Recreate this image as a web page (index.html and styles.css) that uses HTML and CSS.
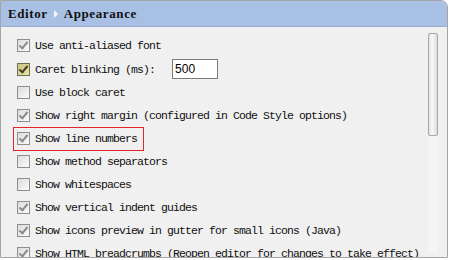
FILE: index.html
```html
<!DOCTYPE html>
<html lang="en">

<head>
    <meta charset="UTF-8">
    <title>Editor - Appearance</title>
    <link rel="stylesheet" href="styles.css">
</head>

<body>
    <div class="panel">
        <div class="header">
            <span>Editor</span>
            <span class="arrow"></span>
            <span>Appearance</span>
        </div>

        <div class="content">
            <ul class="options">
                <li class="option"><span class="box checked"></span>Use anti-aliased font</li>
                <li class="option caret-row">
                    <span class="box checked hover"></span>Caret blinking (ms):
                    <input class="num" type="text" value="500">
                </li>
                <li class="option"><span class="box"></span>Use block caret</li>
                <li class="option"><span class="box checked"></span>Show right margin (configured in Code Style options)</li>
                <li class="option">
                    <span class="marked"><span class="box checked"></span>Show line numbers</span>
                </li>
                <li class="option"><span class="box"></span>Show method separators</li>
                <li class="option"><span class="box"></span>Show whitespaces</li>
                <li class="option"><span class="box checked"></span>Show vertical indent guides</li>
                <li class="option"><span class="box checked"></span>Show icons preview in gutter for small icons (Java)</li>
                <li class="option"><span class="box checked"></span>Show HTML breadcrumbs (Reopen editor for changes to take effect)</li>
            </ul>

            <div class="scrollbar">
                <div class="thumb"></div>
            </div>
        </div>
    </div>
</body>

</html>
```

FILE: styles.css
```css
body {
    margin: 0;
    background-color: #fff;
    font-family: "Liberation Mono", "DejaVu Sans Mono", monospace;
}

.panel {
    width: 446px;
    height: 256px;
    border: 1px solid #a5a5a5;
    border-radius: 0 7px 0 0;
    background-color: #f0f0f0;
    overflow: hidden;
}

.header {
    height: 25px;
    display: flex;
    align-items: center;
    gap: 6px;
    padding-left: 7px;
    background-color: #a8c0e4;
    border-bottom: 1px solid #97aed2;
    font-family: "Liberation Serif", serif;
    font-size: 13px;
    font-weight: bold;
    letter-spacing: 0.6px;
    color: #111;
}

.arrow {
    width: 0;
    height: 0;
    border-top: 4px solid transparent;
    border-bottom: 4px solid transparent;
    border-left: 4px solid #f4f6fa;
}

.content {
    display: flex;
    height: 230px;
}

.options {
    flex: 1;
    list-style: none;
    margin: 0;
    padding: 7px 0 0 12px;
    white-space: nowrap;
    overflow: hidden;
}

.option {
    height: 23px;
    display: flex;
    align-items: center;
    font-size: 11.5px;
    letter-spacing: -0.9px;
    color: #111;
}

.caret-row {
    height: 24px;
}

.marked {
    display: flex;
    align-items: center;
    height: 22px;
    padding-right: 6px;
    border: 1px solid #e0262a;
}

.marked .box {
    margin-left: 3px;
}

.box {
    flex: none;
    width: 11px;
    height: 11px;
    margin: 0 5px 0 4px;
    border: 1px solid #8e8f8f;
    background: linear-gradient(135deg, #dcdcdc, #fbfbfb);
    position: relative;
}

.box.checked::after {
    content: "";
    position: absolute;
    left: 3px;
    top: 0;
    width: 3px;
    height: 7px;
    border: solid #8a8a8a;
    border-width: 0 2px 2px 0;
    transform: rotate(40deg);
}

.box.hover {
    background: linear-gradient(135deg, #c9c281, #eae3a2);
    border-color: #6f6f54;
}

.box.hover::after {
    border-color: #3e3e2a;
}

.num {
    width: 40px;
    height: 16px;
    margin-left: 17px;
    padding: 1px 2px;
    border: 1px solid #7b7b7b;
    font-family: "Liberation Sans", Arial, sans-serif;
    font-size: 12px;
    letter-spacing: 0;
    color: #000;
    outline: none;
}

.scrollbar {
    flex: none;
    width: 10px;
    margin: 6px 9px 5px 0;
    background-color: #f5f5f5;
}

.thumb {
    height: 101px;
    border: 1px solid #a9a9a9;
    border-radius: 2px;
    background: linear-gradient(90deg, #e2e2e2, #f9f9f9 40%, #dcdcdc);
}
```
